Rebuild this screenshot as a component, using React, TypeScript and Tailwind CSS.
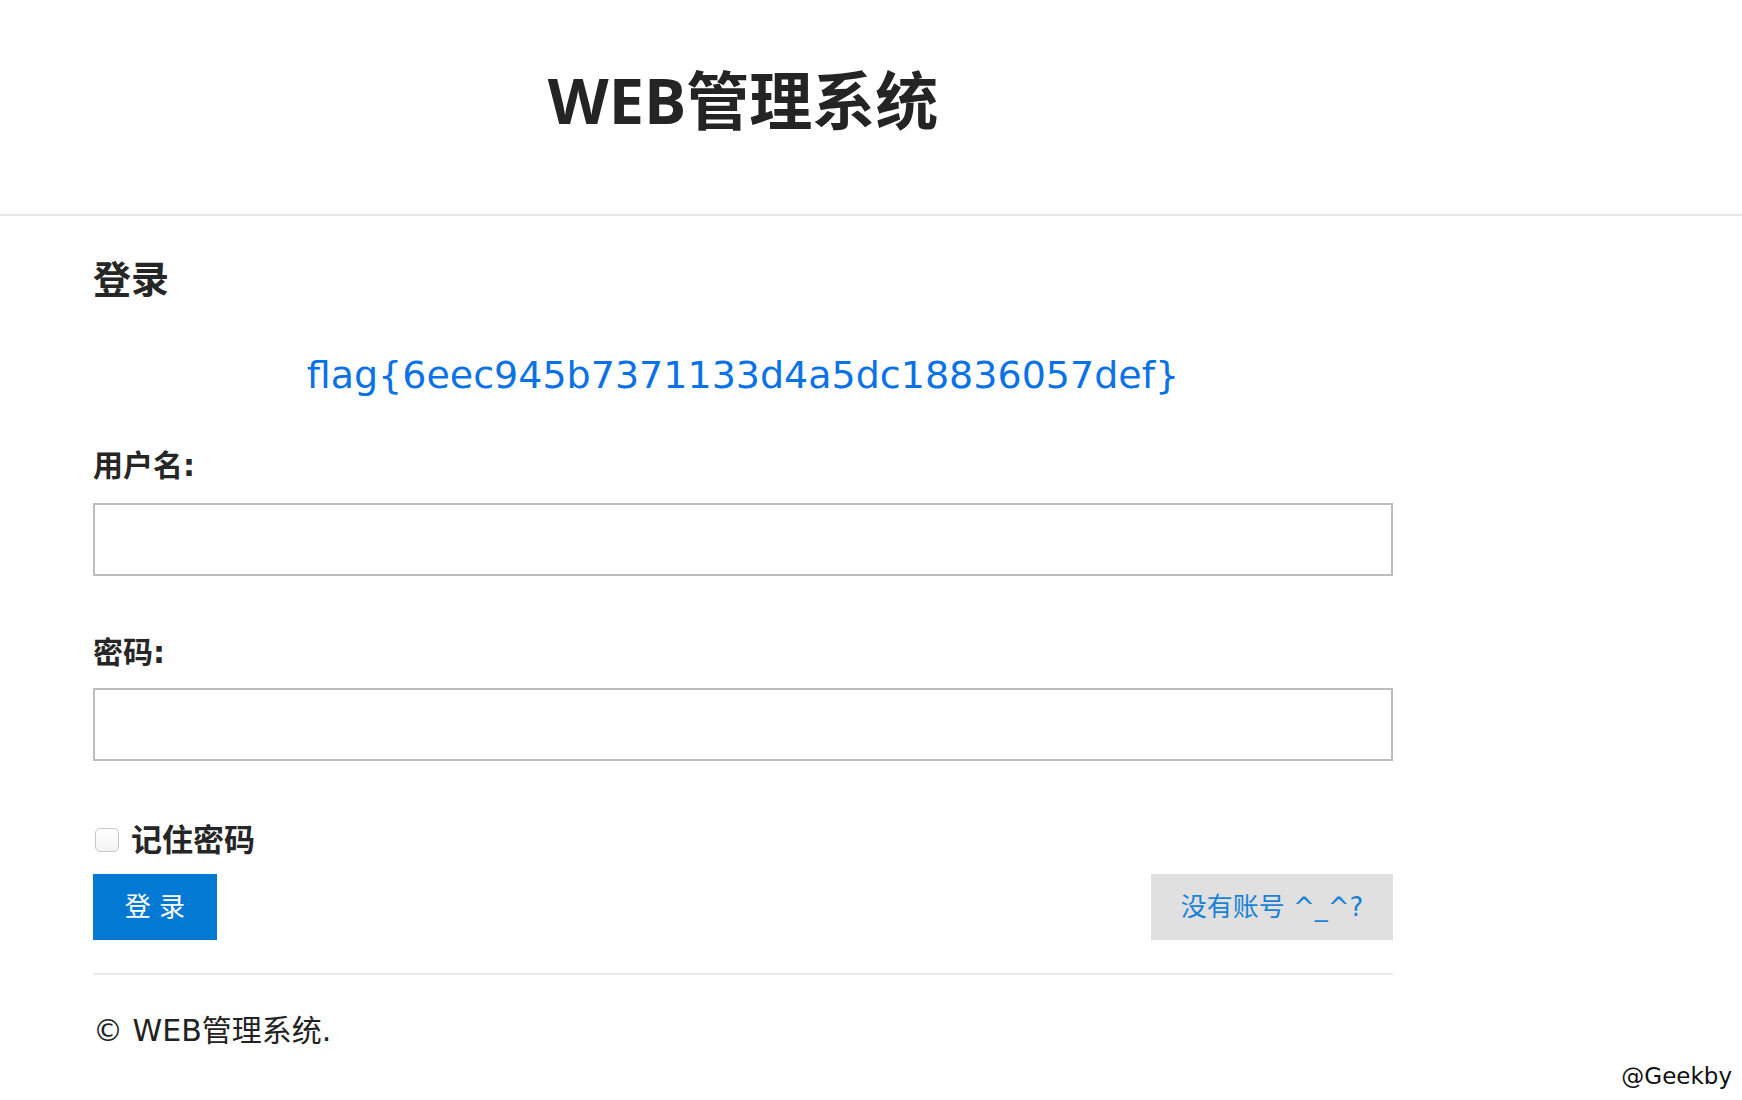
import React from 'react';

const FONT = '[font-family:"DejaVu_Sans","Noto_Sans_CJK_SC",sans-serif]';

function Field({ label, type }: { label: string; type: string }) {
  return (
    <>
      <label className="block text-[30px] leading-[30px] font-bold text-[#262626]">{label}</label>
      <input
        type={type}
        className="block w-full h-[73px] border-2 border-[#bdbdbd] bg-white px-3 text-[24px] outline-none"
      />
    </>
  );
}

export default function App() {
  return (
    <div className={`relative min-h-[1100px] bg-white text-[#222] ${FONT}`}>
      <header className="h-[216px] border-b-2 border-[#e8e8e8] px-[93px]">
        <h1 className='w-[1300px] pt-[68px] text-center text-[63px] leading-[64px] font-bold text-[#242424] [font-family:"Open_Sans","Noto_Sans_CJK_SC",sans-serif]'>
          WEB管理系统
        </h1>
      </header>

      <main className="px-[93px]">
        <div className="w-[1300px]">
          <h2 className="mt-[45px] text-[38px] leading-[38px] font-bold text-[#262626]">登录</h2>

          <p className="mt-[55px] text-center text-[38px] leading-[42px] text-[#0a72e6]">
            flag{'{'}6eec945b7371133d4a5dc18836057def{'}'}
          </p>

          <form className="mt-[55px]" onSubmit={(e) => e.preventDefault()}>
            <div className="[&>input]:mt-[22px]">
              <Field label="用户名:" type="text" />
            </div>
            <div className="mt-[62px] [&>input]:mt-[20px]">
              <Field label="密码:" type="password" />
            </div>

            <label className="mt-[64px] flex items-center gap-[12px] text-[31px] leading-[30px] font-bold text-[#262626]">
              <input
                type="checkbox"
                className="ml-[2px] h-[24px] w-[24px] appearance-none rounded-[5px] border border-[#c8c8c8] bg-gradient-to-b from-white to-[#f3f3f3]"
              />
              记住密码
            </label>

            <div className="mt-[19px] flex items-center justify-between">
              <button
                type="submit"
                className="h-[66px] w-[124px] bg-[#0479d4] text-[26px] text-white"
              >
                登 录
              </button>
              <button
                type="button"
                className="h-[66px] w-[242px] bg-[#e0e0e0] text-[26px] text-[#1a83d6]"
              >
                没有账号 ^_^?
              </button>
            </div>
          </form>

          <footer className="mt-[33px] border-t-2 border-[#e8e8e8]">
            <p className="mt-[41px] text-[30px] leading-[30px] text-[#222]">© WEB管理系统.</p>
          </footer>
        </div>
      </main>

      <span className="absolute bottom-[10px] right-[10px] text-[23px] leading-[28px] font-medium text-[#111]">
        @Geekby
      </span>
    </div>
  );
}
